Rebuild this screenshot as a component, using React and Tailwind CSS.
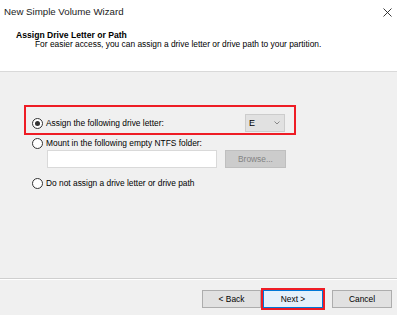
import React from "react";

function Radio({ checked }) {
  return (
    <span className="w-[11px] h-[11px] rounded-full border border-[#333333] bg-white flex items-center justify-center shrink-0">
      {checked && <span className="w-[5px] h-[5px] rounded-full bg-[#333333]"></span>}
    </span>
  );
}

function Button({ children, className = "" }) {
  return (
    <button className={`h-[18px] border border-[#adadad] bg-[#e1e1e1] text-[8.4px] leading-none text-black flex items-center justify-center ${className}`}>
      {children}
    </button>
  );
}

export default function App() {
  return (
    <div className="w-[397px] h-[315px] bg-[#f0f0f0] flex flex-col font-['Liberation_Sans',Arial,sans-serif] text-black overflow-hidden">
      <div className="bg-white h-[72px] border-b border-[#d9d9d9] shrink-0">
        <div className="h-[24px] flex items-center justify-between pl-[4px] pr-[5px]">
          <span className="text-[9.7px] leading-none text-[#1a1a1a]">New Simple Volume Wizard</span>
          <svg width="9" height="9" viewBox="0 0 9 9" className="mr-[0px]">
            <path d="M0.5 0.5 L8.5 8.5 M8.5 0.5 L0.5 8.5" stroke="#222" strokeWidth="0.9" fill="none" />
          </svg>
        </div>
        <div className="pl-[16px] mt-[6px] h-[10px] flex items-center text-[8.6px] font-bold leading-none">
          Assign Drive Letter or Path
        </div>
        <div className="pl-[35px] h-[9px] flex items-center text-[8.4px] leading-none">
          For easier access, you can assign a drive letter or drive path to your partition.
        </div>
      </div>

      <div className="flex-1 pl-[32px] pt-[33px] text-[8.4px] leading-none">
        <div className="-ml-[8px] w-[272px] h-[30px] border-2 border-[#ee1c25] flex items-center pt-[6px] pl-[6px] pr-[9px]">
          <Radio checked />
          <span className="ml-[3px]">Assign the following drive letter:</span>
          <div className="ml-auto w-[40px] h-[18px] bg-[#e1e1e1] border border-[#cccccc] flex items-center justify-between pl-[3px] pr-[4px]">
            <span className="text-[9px]">E</span>
            <svg width="6" height="4" viewBox="0 0 6 4">
              <path d="M0.5 0.5 L3 3 L5.5 0.5" stroke="#707070" strokeWidth="0.8" fill="none" />
            </svg>
          </div>
        </div>

        <div className="mt-[2px] h-[12px] flex items-center">
          <Radio />
          <span className="ml-[3px]">Mount in the following empty NTFS folder:</span>
        </div>
        <div className="mt-[1px] pl-[15px] flex gap-[8px]">
          <div className="w-[170px] h-[18px] bg-white border border-[#d9d9d9]"></div>
          <div className="w-[61px] h-[18px] bg-[#cccccc] border border-[#bfbfbf] text-[#838383] flex items-center justify-center">
            Browse...
          </div>
        </div>

        <div className="mt-[9px] h-[12px] flex items-center">
          <Radio />
          <span className="ml-[3px]">Do not assign a drive letter or drive path</span>
        </div>
      </div>

      <div className="h-[2px] border-t border-[#cfcfcf] border-b border-b-white shrink-0"></div>

      <div className="h-[35px] shrink-0 flex items-center justify-end pr-[5px] pt-[3px]">
        <Button className="w-[59px]">&lt; Back</Button>
        <div className="w-[64px] h-[22px] border-2 border-[#ee1c25]">
          <button className="w-full h-full border border-[#0078d7] bg-[#e5f1fb] text-[8.4px] leading-none flex items-center justify-center">
            Next &gt;
          </button>
        </div>
        <Button className="w-[60px] ml-[7px]">Cancel</Button>
      </div>
    </div>
  );
}
